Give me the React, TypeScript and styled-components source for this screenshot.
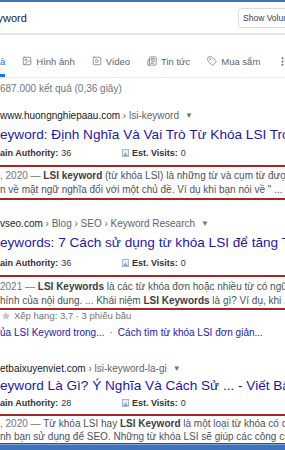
import React from 'react';
import styled, { createGlobalStyle } from 'styled-components';
import { Image as ImageIcon, SquarePlay, Newspaper, Tag, EllipsisVertical, Star } from 'lucide-react';

const GlobalStyle = createGlobalStyle`
  html, body { margin: 0; padding: 0; background: #fff; }
  body { font-family: "Liberation Sans", Arial, sans-serif; }
`;

const Page = styled.div`
  width: 285px;
  height: 450px;
  overflow: hidden;
  display: flex;
  flex-direction: column;
  background: #fff;
`;

const TopBar = styled.div`
  height: 2px;
  flex-shrink: 0;
  background: #3f74bd;
`;

const SearchRow = styled.div`
  height: 31px;
  flex-shrink: 0;
  display: flex;
  align-items: center;
  justify-content: space-between;
  border-bottom: 2px solid #e4e4e4;
`;

const Query = styled.span`
  font-size: 11px;
  color: #222;
  margin-left: -2.5px;
`;

const VolumeButton = styled.button`
  flex-shrink: 0;
  height: 20px;
  margin-right: -15px;
  padding: 0 4px;
  border: 1px solid #dadce0;
  border-radius: 4px;
  background: #fff;
  font: 8.5px "Liberation Sans", Arial, sans-serif;
  color: #3c4043;
  white-space: nowrap;
`;

const TabsBar = styled.nav`
  flex-shrink: 0;
  display: flex;
  align-items: flex-end;
  gap: 17px;
  padding-top: 10px;
  border-bottom: 1px solid #ebebeb;
`;

const Tab = styled.div<{ $active?: boolean }>`
  box-sizing: border-box;
  height: 32px;
  padding-top: 3px;
  display: flex;
  align-items: center;
  gap: 4px;
  font-size: 9.5px;
  white-space: nowrap;
  color: ${p => (p.$active ? '#1a73e8' : '#5f6368')};
  border-bottom: 3px solid ${p => (p.$active ? '#1a73e8' : 'transparent')};
`;

const Content = styled.main`
  flex: 1;
  min-height: 0;
  overflow: hidden;
`;

const Stats = styled.div`
  margin-top: 4px;
  font-size: 10px;
  line-height: 14px;
  color: #70757a;
  white-space: nowrap;
`;

const Result = styled.section<{ $mt: number }>`
  margin-top: ${p => p.$mt}px;
`;

const Url = styled.div`
  display: flex;
  align-items: center;
  font-size: 10px;
  line-height: 14px;
  color: #202124;
  white-space: nowrap;
`;

const Crumb = styled.span`
  color: #5f6368;
`;

const Caret = styled.span`
  margin-left: 6px;
  font-size: 8px;
  color: #70757a;
`;

const Title = styled.h3<{ $mt: number }>`
  margin: ${p => p.$mt}px 0 0;
  font-size: 13.6px;
  font-weight: normal;
  line-height: 18px;
  color: #1f16a6;
  white-space: nowrap;
`;

const Meta = styled.div<{ $mt: number }>`
  margin-top: ${p => p.$mt}px;
  display: grid;
  grid-template-columns: 122px auto;
  font-size: 9px;
  line-height: 12px;
  color: #333;
  white-space: nowrap;
`;

const MetaItem = styled.span`
  display: flex;
  align-items: center;
`;

const Label = styled.b`
  font-weight: bold;
  margin-right: 3px;
`;

const SnippetBox = styled.div<{ $mt: number; $pt: number; $pb: number; $lh?: number }>`
  margin-top: ${p => p.$mt}px;
  padding: ${p => p.$pt}px 0 ${p => p.$pb}px;
  border-top: 2px solid #a3262a;
  border-bottom: 2px solid #a3262a;
  line-height: ${p => p.$lh ?? 14}px;
`;

const SnippetLine = styled.div`
  font-size: 10px;
  color: #4d5156;
  white-space: nowrap;
`;

const Date = styled.span`
  color: #70757a;
`;

const Em = styled.b`
  font-weight: bold;
  color: #3c4043;
`;

const Rating = styled.div`
  display: flex;
  align-items: center;
  gap: 4px;
  padding-left: 2px;
  font-size: 9.5px;
  line-height: 12px;
  color: #70757a;
  white-space: nowrap;
`;

const Sitelinks = styled.div`
  margin-top: 4px;
  font-size: 10px;
  line-height: 14px;
  color: #1f16a6;
  white-space: nowrap;
`;

const Dot = styled.span`
  color: #70757a;
  margin: 0 5px;
`;

const BottomBar = styled.div`
  height: 5px;
  flex-shrink: 0;
  background: #3f74bd;
  border-top: 1px solid #7ea3d6;
`;

const VisitsIcon = () => (
  <svg width="7" height="8" viewBox="0 0 7 8" style={{ marginRight: 3 }}>
    <rect x="0.5" y="0.5" width="6" height="7" fill="#e8eef6" stroke="#a9b6c6" strokeWidth="1" />
    <path d="M1 7 L3.5 3.5 L6 7 Z" fill="#8fa7c4" />
  </svg>
);

const iconProps = { size: 10, strokeWidth: 1.8, color: '#70757a' };

const MetaRow = ({ mt, authority }: { mt: number; authority: number }) => (
  <Meta $mt={mt}>
    <MetaItem>
      <Label>ain Authority:</Label>
      {authority}
    </MetaItem>
    <MetaItem>
      <VisitsIcon />
      <Label>Est. Visits:</Label>0
    </MetaItem>
  </Meta>
);

export default function App() {
  return (
    <Page>
      <GlobalStyle />
      <TopBar />
      <SearchRow>
        <Query>yword</Query>
        <VolumeButton>Show Volume</VolumeButton>
      </SearchRow>
      <TabsBar>
        <Tab $active>à</Tab>
        <Tab>
          <ImageIcon {...iconProps} />
          Hình ảnh
        </Tab>
        <Tab>
          <SquarePlay {...iconProps} />
          Video
        </Tab>
        <Tab>
          <Newspaper {...iconProps} />
          Tin tức
        </Tab>
        <Tab>
          <Tag {...iconProps} />
          Mua sắm
        </Tab>
        <Tab>
          <EllipsisVertical size={11} strokeWidth={2.2} color="#5f6368" />
        </Tab>
      </TabsBar>
      <Content>
        <Stats>687.000 kết quả (0,36 giây)</Stats>

        <Result $mt={13}>
          <Url>
            www.huongnghiepaau.com<Crumb>&nbsp;› lsi-keyword</Crumb>
            <Caret>▼</Caret>
          </Url>
          <Title $mt={3}>eyword: Định Nghĩa Và Vai Trò Từ Khóa LSI Trong SEO</Title>
          <MetaRow mt={3} authority={36} />
          <SnippetBox $mt={6} $pt={2} $pb={1}>
            <SnippetLine>
              <Date>, 2020 — </Date>
              <Em>LSI keyword</Em> (từ khóa LSI) là những từ và cụm từ được coi
            </SnippetLine>
            <SnippetLine>n về mặt ngữ nghĩa đối với một chủ đề. Ví dụ khi bạn nói về " ...</SnippetLine>
          </SnippetBox>
        </Result>

        <Result $mt={17}>
          <Url>
            vseo.com<Crumb>&nbsp;› Blog › SEO › Keyword Research</Crumb>
            <Caret>▼</Caret>
          </Url>
          <Title $mt={3}>eywords: 7 Cách sử dụng từ khóa LSI để tăng Traffic</Title>
          <MetaRow mt={5} authority={36} />
          <SnippetBox $mt={6} $pt={3} $pb={0}>
            <SnippetLine>
              <Date>2021 — </Date>
              <Em>LSI Keywords</Em> là các từ khóa đơn hoặc nhiều từ có ngữ cảnh
            </SnippetLine>
            <SnippetLine>
              hính của nội dung. ... Khái niệm <Em>LSI Keywords</Em> là gì? Ví dụ, khi ...
            </SnippetLine>
          </SnippetBox>
          <Rating>
            <Star size={8} fill="#c4c4c4" color="#c4c4c4" />
            Xếp hạng: 3,7 · 3 phiếu bầu
          </Rating>
          <Sitelinks>
            ủa LSI Keyword trong...<Dot>·</Dot>Cách tìm từ khóa LSI đơn giản...
          </Sitelinks>
        </Result>

        <Result $mt={22}>
          <Url>
            etbaixuyenviet.com<Crumb>&nbsp;› lsi-keyword-la-gi</Crumb>
            <Caret>▼</Caret>
          </Url>
          <Title $mt={1}>eyword Là Gì? Ý Nghĩa Và Cách Sử ... - Viết Bài</Title>
          <MetaRow mt={2} authority={28} />
          <SnippetBox $mt={5} $pt={1} $pb={0} $lh={13}>
            <SnippetLine>
              <Date>, 2020 — </Date>Từ khóa LSI hay <Em>LSI Keyword</Em> là một loại từ khóa có cùng
            </SnippetLine>
            <SnippetLine>nh bạn sử dụng để SEO. Những từ khóa LSI sẽ giúp các công cụ</SnippetLine>
          </SnippetBox>
        </Result>
      </Content>
      <BottomBar />
    </Page>
  );
}
